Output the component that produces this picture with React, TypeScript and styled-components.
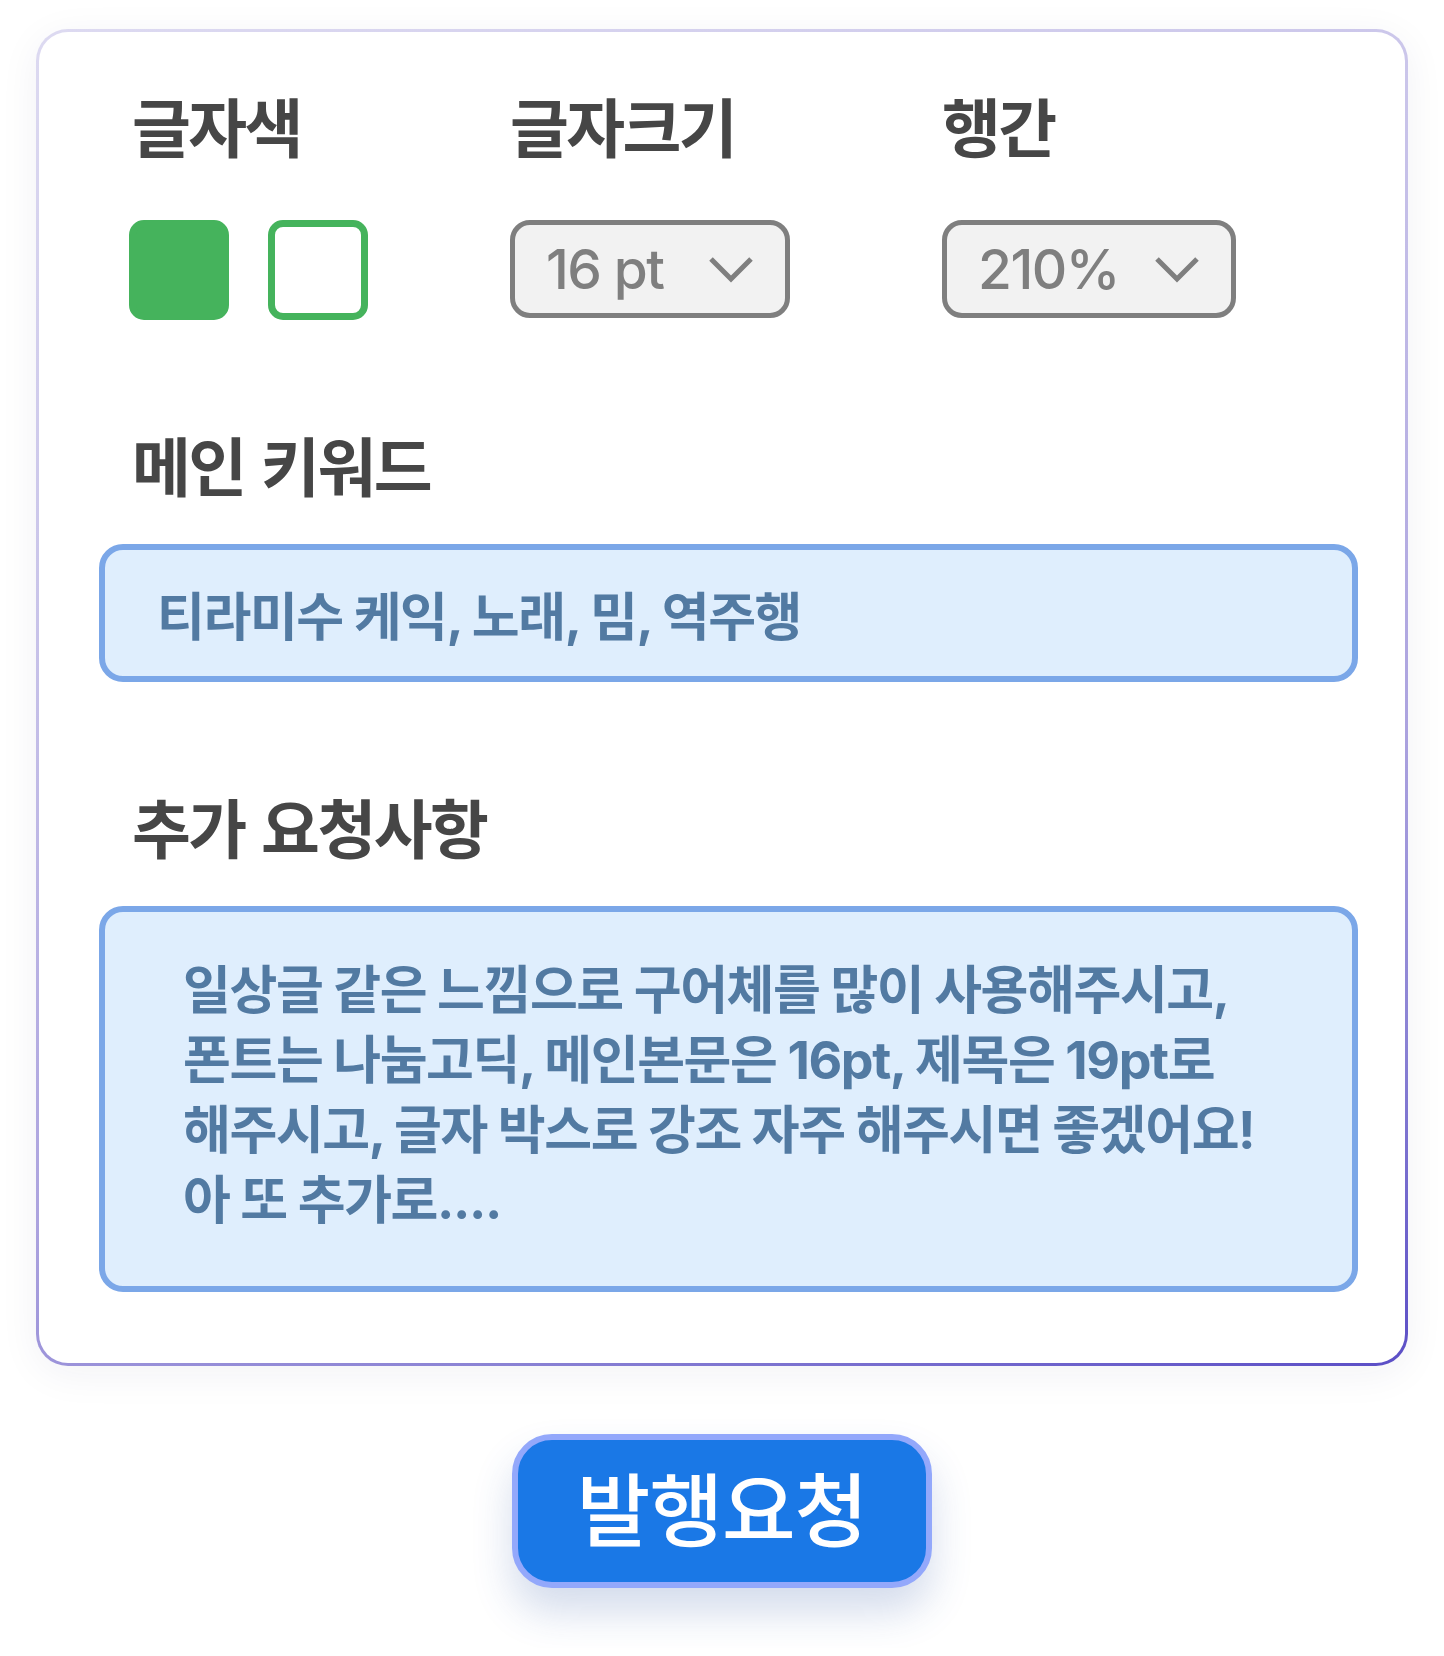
import React from "react";
import styled, { createGlobalStyle } from "styled-components";

const GlobalStyle = createGlobalStyle`
  html, body {
    margin: 0;
    padding: 0;
    background: #ffffff;
  }
  body {
    font-family: "Inter", "Noto Sans CJK KR", sans-serif;
    -webkit-font-smoothing: antialiased;
  }
`;

const FONT = `"Inter", "Noto Sans CJK KR", sans-serif`;

const Page = styled.div`
  display: flex;
  flex-direction: column;
  align-items: center;
  padding: 29px 36px 60px;
  box-sizing: border-box;
  width: 1444px;
`;

const Card = styled.section`
  width: 100%;
  box-sizing: border-box;
  border: 3px solid transparent;
  border-radius: 32px;
  background:
    linear-gradient(#ffffff, #ffffff) padding-box,
    linear-gradient(160deg, #dddaf1 0%, #cac5ea 30%, #aca3df 65%, #8a82d4 82%, #5b4ec6 100%) border-box;
  box-shadow: 0 8px 40px rgba(40, 40, 90, 0.06);
  padding: 62px 47px 71px 60px;
  display: flex;
  flex-direction: column;
`;

const SettingsRow = styled.div`
  display: grid;
  grid-template-columns: 381px 432px auto;
  padding-left: 30px;
`;

const SettingGroup = styled.div`
  display: flex;
  flex-direction: column;
  align-items: flex-start;
  gap: 56px;
`;

const Label = styled.h2<{ $inset?: number }>`
  margin: 0;
  padding-left: ${(p) => p.$inset ?? 0}px;
  font-family: ${FONT};
  font-size: 64px;
  font-weight: 700;
  line-height: 70px;
  letter-spacing: -2.6px;
  word-spacing: 4px;
  color: #464646;
  white-space: nowrap;
`;

const SwatchRow = styled.div`
  display: flex;
  gap: 39px;
`;

const Swatch = styled.button<{ $filled?: boolean }>`
  width: 100px;
  height: 100px;
  box-sizing: border-box;
  border-radius: 15px;
  border: 7px solid #45b35c;
  background: ${(p) => (p.$filled ? "#45b35c" : "#ffffff")};
  padding: 0;
  cursor: pointer;
`;

const Select = styled.button<{ $width: number }>`
  width: ${(p) => p.$width}px;
  height: 98px;
  box-sizing: border-box;
  display: flex;
  align-items: center;
  justify-content: space-between;
  padding: 0 31px 0 31px;
  border: 5px solid #7f7f7f;
  border-radius: 20px;
  background: #f2f2f2;
  color: #7f7f7f;
  font-family: ${FONT};
  font-size: 55px;
  font-weight: 500;
  letter-spacing: -1.5px;
  cursor: pointer;
`;

const Chevron = () => (
  <svg width="46" height="27" viewBox="0 0 46 27" fill="none">
    <polyline
      points="3,3 23,23 43,3"
      stroke="#7f7f7f"
      strokeWidth="5"
      strokeLinecap="butt"
      strokeLinejoin="miter"
    />
  </svg>
);

const Section = styled.div`
  display: flex;
  flex-direction: column;
  gap: 41px;
  margin-top: 113px;
`;

const InfoBox = styled.div<{ $height: number }>`
  height: ${(p) => p.$height}px;
  box-sizing: border-box;
  border: 6px solid #7ba7e8;
  border-radius: 24px;
  background: #dfeefd;
  color: #527aa2;
  font-family: ${FONT};
  font-size: 52px;
  font-weight: 700;
  letter-spacing: -1.4px;
  white-space: nowrap;
`;

const KeywordBox = styled(InfoBox)`
  display: flex;
  align-items: center;
  padding-left: 52px;
`;

const RequestBox = styled(InfoBox)`
  padding: 44px 40px 0 78px;
  line-height: 70px;
`;

const SubmitButton = styled.button`
  margin-top: 68px;
  width: 420px;
  height: 154px;
  box-sizing: border-box;
  border: 6px solid #93a8fb;
  border-radius: 40px;
  background: #1a78e6;
  color: #ffffff;
  font-family: ${FONT};
  font-size: 80px;
  font-weight: 500;
  letter-spacing: -1px;
  line-height: 1;
  padding: 0;
  box-shadow: 0 24px 40px rgba(40, 80, 160, 0.2);
  cursor: pointer;
`;

const requestLines = [
  "일상글 같은 느낌으로 구어체를 많이 사용해주시고,",
  "폰트는 나눔고딕, 메인본문은 16pt, 제목은 19pt로",
  "해주시고, 글자 박스로 강조 자주 해주시면 좋겠어요!",
  "아 또 추가로....",
];

export default function App() {
  return (
    <>
      <GlobalStyle />
      <Page>
        <Card>
          <SettingsRow>
            <SettingGroup>
              <Label $inset={3}>글자색</Label>
              <SwatchRow>
                <Swatch $filled aria-label="채우기" />
                <Swatch aria-label="테두리" />
              </SwatchRow>
            </SettingGroup>
            <SettingGroup>
              <Label>글자크기</Label>
              <Select $width={280}>
                <span>16 pt</span>
                <Chevron />
              </Select>
            </SettingGroup>
            <SettingGroup>
              <Label>행간</Label>
              <Select $width={294}>
                <span>210%</span>
                <Chevron />
              </Select>
            </SettingGroup>
          </SettingsRow>

          <Section>
            <Label $inset={33}>메인 키워드</Label>
            <KeywordBox $height={138}>티라미수 케익, 노래, 밈, 역주행</KeywordBox>
          </Section>

          <Section>
            <Label $inset={33}>추가 요청사항</Label>
            <RequestBox $height={386}>
              {requestLines.map((line) => (
                <div key={line}>{line}</div>
              ))}
            </RequestBox>
          </Section>
        </Card>
        <SubmitButton>발행요청</SubmitButton>
      </Page>
    </>
  );
}
